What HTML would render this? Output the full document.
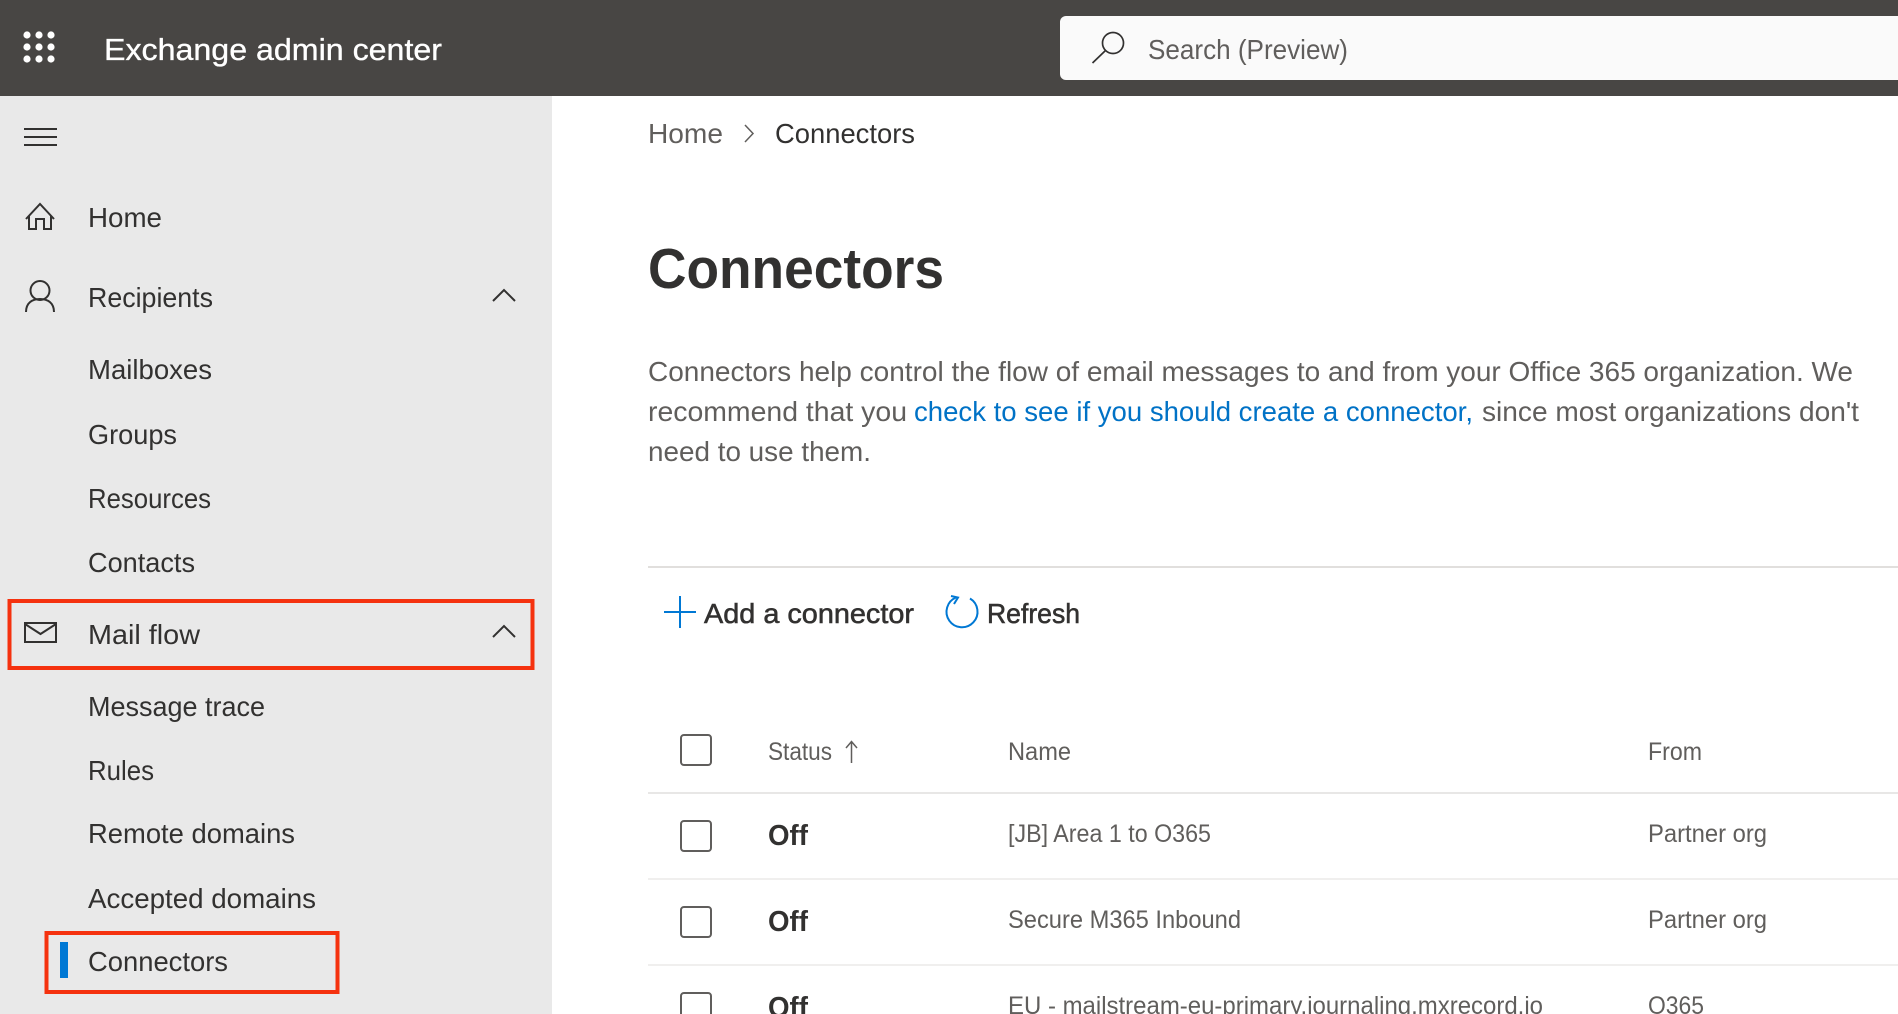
<!DOCTYPE html>
<html lang="en">
<head>
<meta charset="utf-8">
<title>Exchange admin center - Connectors</title>
<style>
html,body{margin:0;padding:0;background:#fff;width:1898px;height:1014px;overflow:hidden}
svg{display:block}
text{font-family:"Liberation Sans",Arial,sans-serif;fill:#323130}
.s{font-size:28px}
.g{fill:#605e5c}
.sb{stroke:#323130;stroke-width:.55px;font-size:28px}
.t{font-size:25px}
.off{font-size:29px;font-weight:700}
.i{fill:none;stroke:#323130;stroke-width:2}
.c{fill:#fff;stroke:#605e5c;stroke-width:2}
</style>
</head>
<body>
<svg width="1898" height="1014" viewBox="0 0 1898 1014" xmlns="http://www.w3.org/2000/svg">
<rect width="1898" height="1014" fill="#fff"/>
<!-- header -->
<rect width="1898" height="96" fill="#484644"/>
<g fill="#fff">
<circle cx="27" cy="35" r="3.600"/><circle cx="39" cy="35" r="3.600"/><circle cx="51" cy="35" r="3.600"/>
<circle cx="27" cy="47" r="3.600"/><circle cx="39" cy="47" r="3.600"/><circle cx="51" cy="47" r="3.600"/>
<circle cx="27" cy="59" r="3.600"/><circle cx="39" cy="59" r="3.600"/><circle cx="51" cy="59" r="3.600"/>
</g>
<text x="104" y="60" font-size="31" style="fill:#fff;stroke:#fff;stroke-width:.35px" textLength="338" lengthAdjust="spacingAndGlyphs">Exchange admin center</text>
<rect x="1060" y="16" width="860" height="64" rx="6" fill="#fafafa"/>
<circle cx="1113" cy="43" r="10.500" class="i" style="stroke-width:1.700"/>
<path d="M1105.500 50.500L1092.500 63" class="i" style="stroke-width:1.700"/>
<text x="1148" y="59" font-size="28" class="g" textLength="200" lengthAdjust="spacingAndGlyphs">Search (Preview)</text>
<!-- sidebar -->
<rect y="96" width="552" height="918" fill="#e9e9e9"/>
<path d="M24 129H57M24 137H57M24 145H57" class="i"/>
<path d="M26 219L40 204L54 219M29 216V229H36V219H44V229H51V216" class="i" stroke-linejoin="miter"/>
<text x="88" y="227" class="s" textLength="74" lengthAdjust="spacingAndGlyphs">Home</text>
<circle cx="40" cy="290.500" r="9.500" class="i"/>
<path d="M26 312C26 303 32 299 40 299C48 299 54 303 54 312" class="i"/>
<text x="88" y="307" class="s" textLength="125" lengthAdjust="spacingAndGlyphs">Recipients</text>
<path d="M493 301L504 290L515 301" class="i"/>
<text x="88" y="379" class="s" textLength="124" lengthAdjust="spacingAndGlyphs">Mailboxes</text>
<text x="88" y="444" class="s" textLength="89" lengthAdjust="spacingAndGlyphs">Groups</text>
<text x="88" y="508" class="s" textLength="123" lengthAdjust="spacingAndGlyphs">Resources</text>
<text x="88" y="572" class="s" textLength="107" lengthAdjust="spacingAndGlyphs">Contacts</text>
<rect x="25" y="623" width="31" height="19" class="i"/>
<path d="M25 624L40.500 634L56 624" class="i"/>
<text x="88" y="644" class="s" textLength="112" lengthAdjust="spacingAndGlyphs">Mail flow</text>
<path d="M493 637L504 626L515 637" class="i"/>
<text x="88" y="716" class="s" textLength="177" lengthAdjust="spacingAndGlyphs">Message trace</text>
<text x="88" y="780" class="s" textLength="66" lengthAdjust="spacingAndGlyphs">Rules</text>
<text x="88" y="843" class="s" textLength="207" lengthAdjust="spacingAndGlyphs">Remote domains</text>
<text x="88" y="908" class="s" textLength="228" lengthAdjust="spacingAndGlyphs">Accepted domains</text>
<rect x="60" y="942" width="8" height="36" fill="#0078d4"/>
<text x="88" y="971" class="s" textLength="140" lengthAdjust="spacingAndGlyphs">Connectors</text>
<rect x="9.500" y="601" width="523" height="67" fill="none" stroke="#f5320f" stroke-width="4"/>
<rect x="46.500" y="933" width="291" height="59" fill="none" stroke="#f5320f" stroke-width="4"/>
<!-- main -->
<text x="648" y="143" class="s g" textLength="75" lengthAdjust="spacingAndGlyphs">Home</text>
<path d="M745 125L753 133.500L745 142" fill="none" stroke="#605e5c" stroke-width="1.500"/>
<text x="775" y="143" class="s" textLength="140" lengthAdjust="spacingAndGlyphs">Connectors</text>
<text x="648" y="288" font-size="57" font-weight="700" textLength="296" lengthAdjust="spacingAndGlyphs">Connectors</text>
<text x="648" y="381" class="s g" textLength="1205" lengthAdjust="spacingAndGlyphs">Connectors help control the flow of email messages to and from your Office 365 organization. We</text>
<text x="648" y="421" class="s g" textLength="259" lengthAdjust="spacingAndGlyphs">recommend that you</text>
<text x="914" y="421" class="s" style="fill:#0072c6" textLength="559" lengthAdjust="spacingAndGlyphs">check to see if you should create a connector,</text>
<text x="1482" y="421" class="s g" textLength="377" lengthAdjust="spacingAndGlyphs">since most organizations don't</text>
<text x="648" y="461" class="s g" textLength="223" lengthAdjust="spacingAndGlyphs">need to use them.</text>
<rect x="648" y="566" width="1250" height="2" fill="#e1dfdd"/>
<!-- toolbar -->
<path d="M680 596V628M664 612H696" fill="none" stroke="#0078d4" stroke-width="2"/>
<text x="704" y="623" class="sb" textLength="210" lengthAdjust="spacingAndGlyphs">Add a connector</text>
<path d="M956 597.500A15.500 15.500 0 1 0 970 598.500" fill="none" stroke="#0078d4" stroke-width="2"/>
<path d="M951 596L958 597.500L954 604" fill="none" stroke="#0078d4" stroke-width="2"/>
<text x="987" y="623" class="sb" textLength="93" lengthAdjust="spacingAndGlyphs">Refresh</text>
<!-- table header -->
<rect x="681" y="735" width="30" height="30" rx="3" class="c"/>
<text x="768" y="760" class="t g" textLength="64" lengthAdjust="spacingAndGlyphs">Status</text>
<path d="M851.500 742V763M846 748L851.500 741.500L857 748" fill="none" stroke="#605e5c" stroke-width="1.500"/>
<text x="1008" y="760" class="t g" textLength="63" lengthAdjust="spacingAndGlyphs">Name</text>
<text x="1648" y="760" class="t g" textLength="54" lengthAdjust="spacingAndGlyphs">From</text>
<rect x="648" y="792" width="1250" height="2" fill="#e8e7e6"/>
<!-- row 1 -->
<rect x="681" y="821" width="30" height="30" rx="3" class="c"/>
<text x="768" y="845" class="off" textLength="40" lengthAdjust="spacingAndGlyphs">Off</text>
<text x="1008" y="842" class="t g" textLength="203" lengthAdjust="spacingAndGlyphs">[JB] Area 1 to O365</text>
<text x="1648" y="842" class="t g" textLength="119" lengthAdjust="spacingAndGlyphs">Partner org</text>
<rect x="648" y="878" width="1250" height="2" fill="#f0efee"/>
<!-- row 2 -->
<rect x="681" y="907" width="30" height="30" rx="3" class="c"/>
<text x="768" y="931" class="off" textLength="40" lengthAdjust="spacingAndGlyphs">Off</text>
<text x="1008" y="928" class="t g" textLength="233" lengthAdjust="spacingAndGlyphs">Secure M365 Inbound</text>
<text x="1648" y="928" class="t g" textLength="119" lengthAdjust="spacingAndGlyphs">Partner org</text>
<rect x="648" y="964" width="1250" height="2" fill="#f0efee"/>
<!-- row 3 -->
<rect x="681" y="993" width="30" height="30" rx="3" class="c"/>
<text x="768" y="1017" class="off" textLength="40" lengthAdjust="spacingAndGlyphs">Off</text>
<text x="1008" y="1014" class="t g" textLength="535" lengthAdjust="spacingAndGlyphs">EU - mailstream-eu-primary.journaling.mxrecord.io</text>
<text x="1648" y="1014" class="t g" textLength="56" lengthAdjust="spacingAndGlyphs">O365</text>
</svg>
</body>
</html>
